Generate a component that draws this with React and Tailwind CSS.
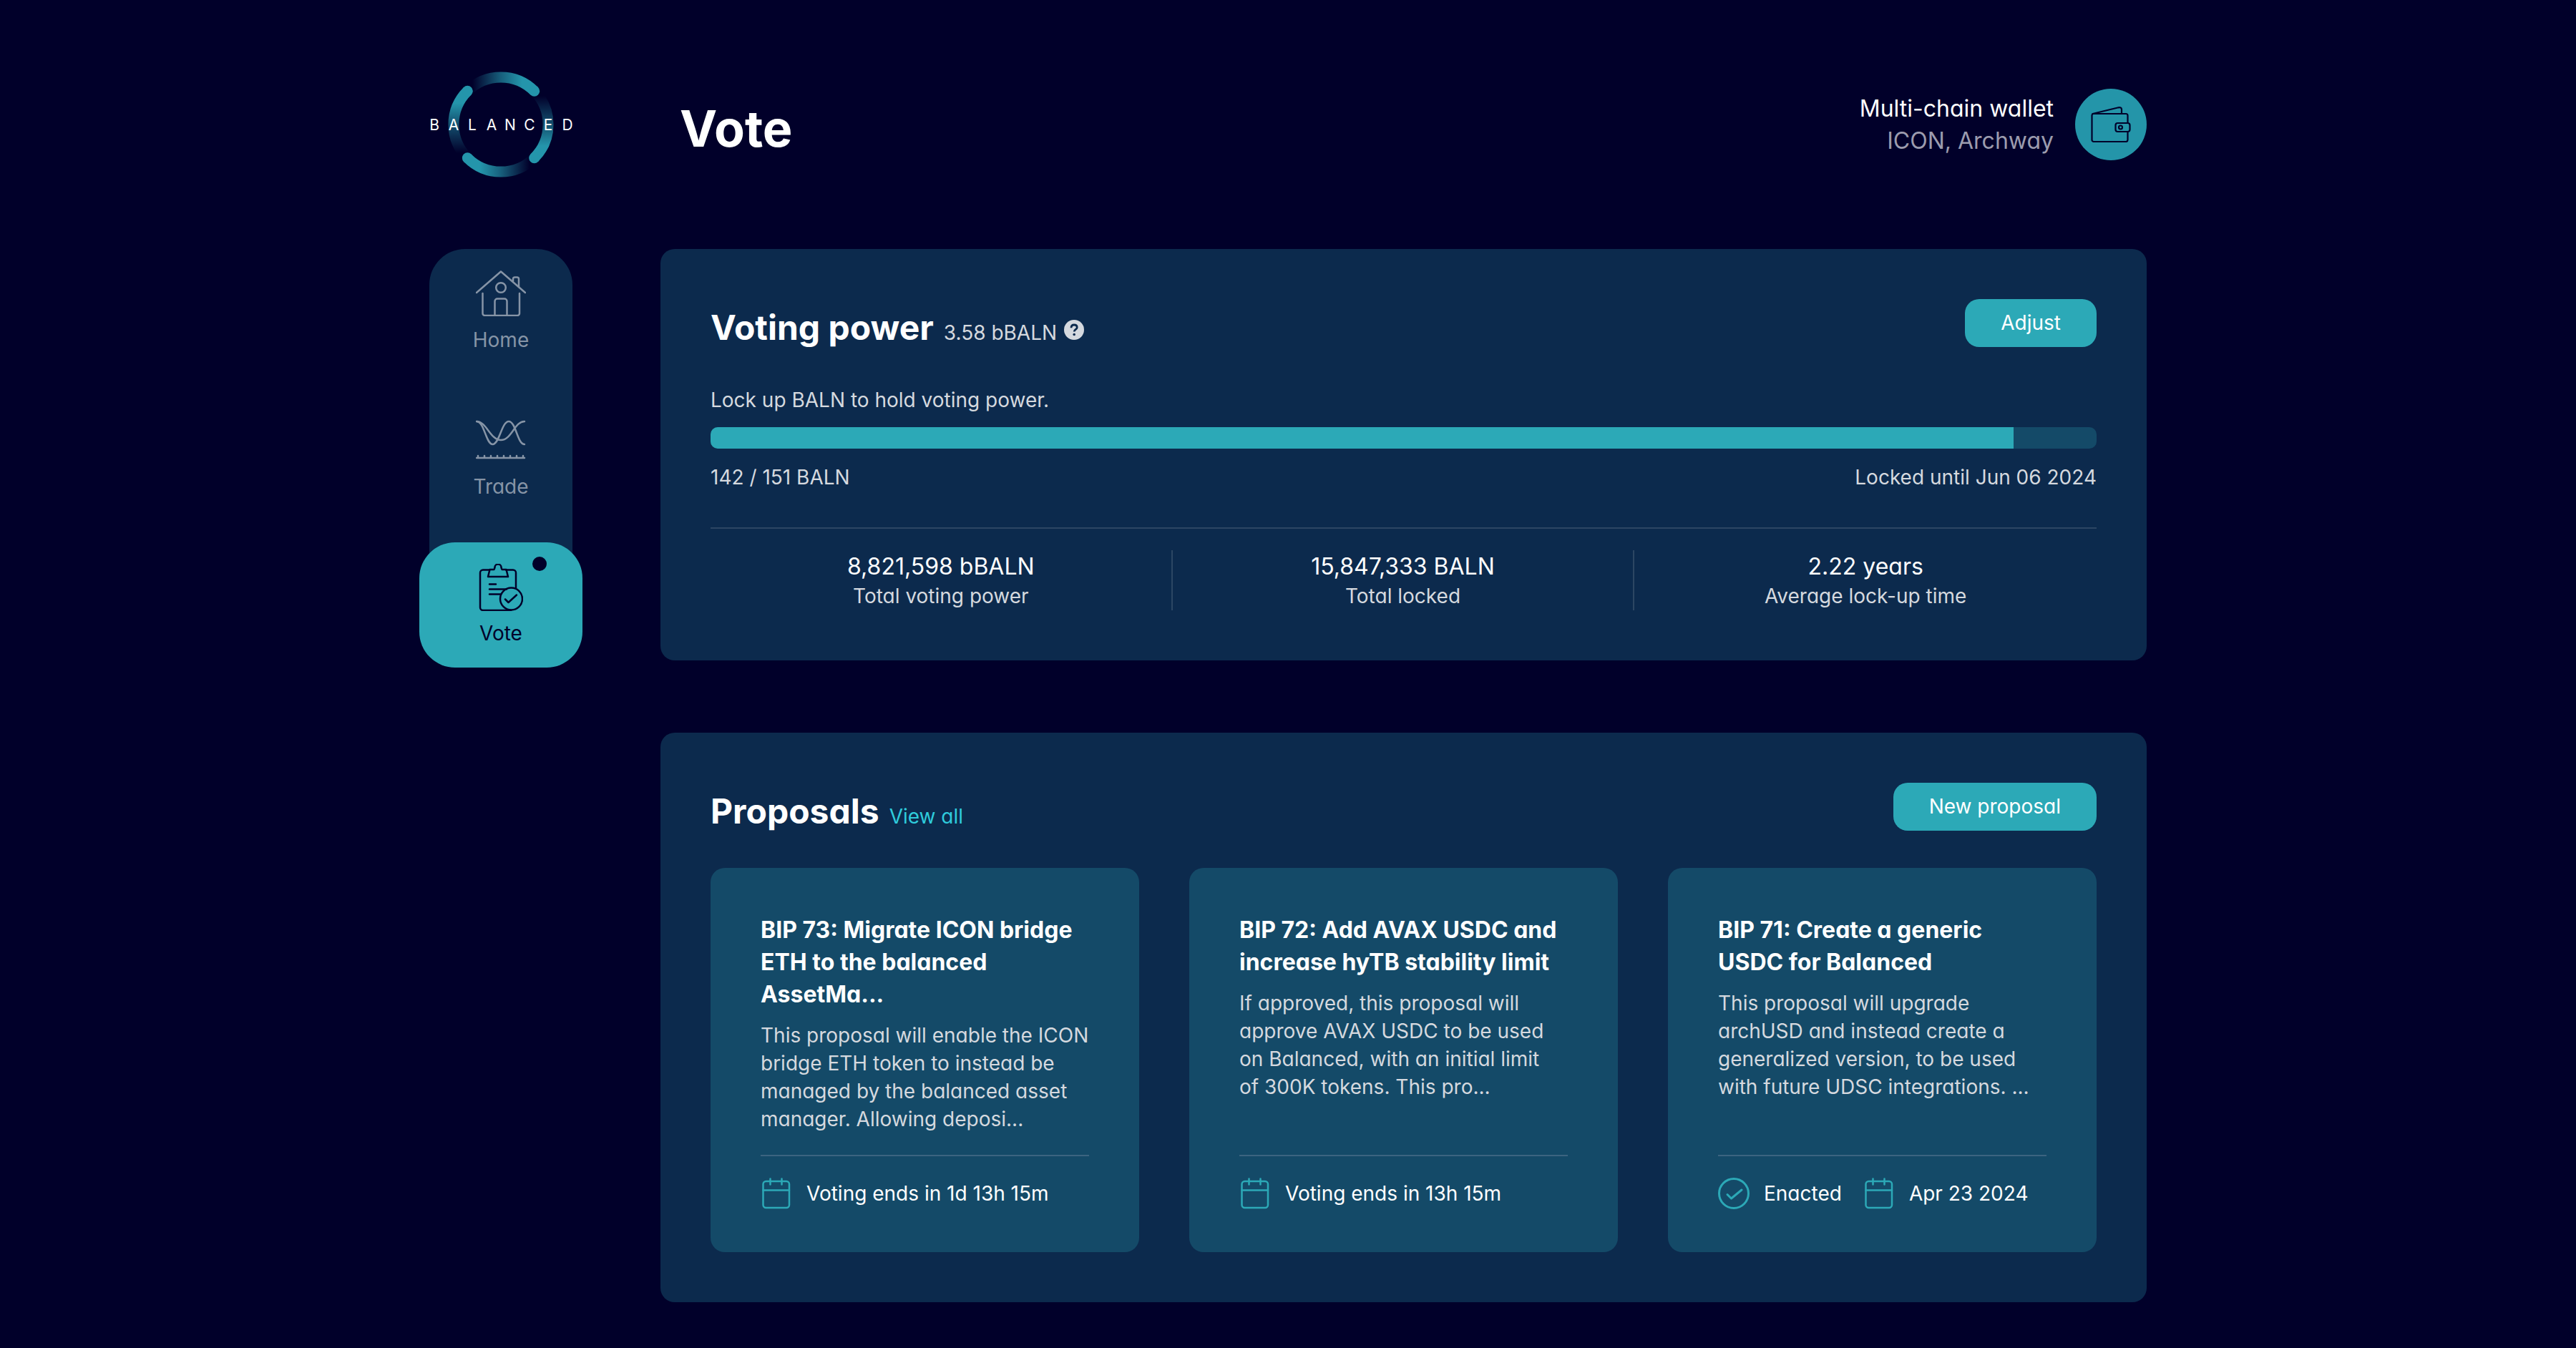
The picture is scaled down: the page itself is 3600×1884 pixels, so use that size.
const letters = "BALANCED";

function Logo() {
  return (
    <svg viewBox="0 0 200 148" className="w-[200px] shrink-0 overflow-visible" role="img" aria-label="Balanced">
      <defs>
        <linearGradient id="fadeRight" gradientUnits="userSpaceOnUse" x1="60" y1="0" x2="142" y2="0">
          <stop offset="0" stopColor="#2495ab" stopOpacity="0" />
          <stop offset="0.5" stopColor="#2495ab" stopOpacity="0.65" />
          <stop offset="0.85" stopColor="#2495ab" />
        </linearGradient>
        <linearGradient id="fadeDown" gradientUnits="userSpaceOnUse" x1="0" y1="34" x2="0" y2="116">
          <stop offset="0" stopColor="#2495ab" stopOpacity="0" />
          <stop offset="0.5" stopColor="#2495ab" stopOpacity="0.55" />
          <stop offset="0.85" stopColor="#2495ab" />
        </linearGradient>
      </defs>
      <g fill="none" strokeWidth="15">
        {["fadeRight", "fadeDown"].map((id, i) => (
          <g key={id} stroke={`url(#${id})`}>
            <path d={i ? "M146.7 27.3A66 66 0 0 1 146.7 120.7" : "M53.3 27.3A66 66 0 0 1 146.7 27.3"} />
            <path
              transform="rotate(180 100 74)"
              d={i ? "M146.7 27.3A66 66 0 0 1 146.7 120.7" : "M53.3 27.3A66 66 0 0 1 146.7 27.3"}
            />
          </g>
        ))}
      </g>
      <g fill="#2495ab">
        <circle cx="146.7" cy="27.3" r="7.5" />
        <circle cx="146.7" cy="120.7" r="7.5" />
        <circle cx="53.3" cy="120.7" r="7.5" />
        <circle cx="53.3" cy="27.3" r="7.5" />
      </g>
      <text
        x="7 34 60 87 113 140 166 193"
        y="82"
        textAnchor="middle"
        fill="#fff"
        fontSize="21"
        fontWeight="400"
      >
        {letters}
      </text>
    </svg>
  );
}

function HomeIcon() {
  return (
    <svg viewBox="0 0 70 64" className="h-16 w-[70px]" fill="none" stroke="currentColor" strokeWidth="2.5" strokeLinecap="round" strokeLinejoin="round">
      <path d="M1 31 35 1.5 69 31" />
      <path d="M9.5 32V60a3 3 0 0 0 3 3H58a3 3 0 0 0 3-3V32" />
      <path d="M26.5 63V43a3.5 3.5 0 0 1 3.5-3.5H40a3.5 3.5 0 0 1 3.5 3.5V63" />
      <circle cx="35" cy="24" r="6.8" />
      <path d="M52 15V12a2.5 2.5 0 0 1 2.5-2.5H57.5A2.5 2.5 0 0 1 60 12V23" />
    </svg>
  );
}

function TradeIcon() {
  return (
    <svg viewBox="0 0 70 64" className="h-16 w-[70px]" fill="none" stroke="currentColor" strokeWidth="2.5" strokeLinecap="round" strokeLinejoin="round">
      <path d="M1 6C12 6 14 38 23.5 38S36 6 46 6 58 38 68 38" />
      <path d="M1 6C15 6 20 32 35 32S54 6 68 6" />
      <path d="M1 57H68M3 57V54M12 57V54M21 57V54M30 57V54M39 57V54M48 57V54M57 57V54M66 57V54" />
    </svg>
  );
}

function VoteIcon() {
  return (
    <svg viewBox="0 0 62 66" className="h-[66px] w-[62px]" fill="none" stroke="currentColor" strokeWidth="2.5" strokeLinecap="round" strokeLinejoin="round">
      <path d="M15 8.5H6a4 4 0 0 0-4 4V61a4 4 0 0 0 4 4H45" />
      <path d="M38 8.5H48a4 4 0 0 1 4 4V34" />
      <path d="M13 18 15.5 8H21C22 8 22 6.5 22.5 5A4.5 4.5 0 0 1 31.5 5C32 6.5 32 8 33 8H38.5L41 18Z" />
      <path d="M15 28.5H24M15 35.5H39M15 42.5H31" />
      <circle cx="45.5" cy="49" r="15.5" />
      <path d="M37 49.5 41.5 54 53 43.5" />
    </svg>
  );
}

function WalletIcon() {
  return (
    <svg viewBox="0 0 56 50" className="h-[50px] w-14" fill="none" stroke="#01002a" strokeWidth="2.2" strokeLinecap="round" strokeLinejoin="round">
      <rect x="1.5" y="10" width="50" height="39" rx="2.5" />
      <path d="M2.5 10 38.5 1.3C41 .8 43 1.6 43 4V10" />
      <rect x="34.5" y="23" width="20" height="12" rx="3" fill="#2495a9" />
      <circle cx="41.5" cy="29" r="2.5" />
    </svg>
  );
}

function CalendarIcon() {
  return (
    <svg viewBox="0 0 44 44" className="size-11 shrink-0" fill="none" stroke="#2ca9b7" strokeWidth="2.5" strokeLinecap="round">
      <rect x="3.5" y="5" width="36.5" height="37" rx="4" />
      <path d="M3.5 17.5H40M13.5 1.5V9.5M29.5 1.5V9.5" />
    </svg>
  );
}

function CheckIcon() {
  return (
    <svg viewBox="0 0 44 44" className="size-11 shrink-0" fill="none" stroke="#2ca9b7" strokeWidth="3" strokeLinecap="round" strokeLinejoin="round">
      <circle cx="22" cy="22" r="20.5" />
      <path d="M13 23.5 18.5 29 33 17" />
    </svg>
  );
}

function HelpIcon() {
  return (
    <svg viewBox="0 0 28 28" className="size-7">
      <circle cx="14" cy="14" r="14" fill="#d5d9df" />
      <path d="M10 11.2C10 8.6 11.7 7 14.1 7S18.2 8.5 18.2 10.7C18.2 13.4 14.2 13.5 14.2 16.5" fill="none" stroke="#0c2a4d" strokeWidth="2.8" />
      <circle cx="14.2" cy="20.5" r="1.8" fill="#0c2a4d" />
    </svg>
  );
}

const navItems = [
  { label: "Home", Icon: HomeIcon },
  { label: "Trade", Icon: TradeIcon },
  { label: "Vote", Icon: VoteIcon, active: true },
];

const stats = [
  { value: "8,821,598 bBALN", label: "Total voting power" },
  { value: "15,847,333 BALN", label: "Total locked" },
  { value: "2.22 years", label: "Average lock-up time" },
];

const proposals = [
  {
    title: "BIP 73: Migrate ICON bridge ETH to the balanced AssetMa...",
    body: "This proposal will enable the ICON\nbridge ETH token to instead be\nmanaged by the balanced asset\nmanager. Allowing deposi...",
    meta: [{ Icon: CalendarIcon, text: "Voting ends in 1d 13h 15m" }],
  },
  {
    title: "BIP 72: Add AVAX USDC and increase hyTB stability limit",
    body: "If approved, this proposal will\napprove AVAX USDC to be used\non Balanced, with an initial limit\nof 300K tokens. This pro...",
    meta: [{ Icon: CalendarIcon, text: "Voting ends in 13h 15m" }],
  },
  {
    title: "BIP 71: Create a generic USDC for Balanced",
    body: "This proposal will upgrade\narchUSD and instead create a\ngeneralized version, to be used\nwith future UDSC integrations. ...",
    meta: [
      { Icon: CheckIcon, text: "Enacted" },
      { Icon: CalendarIcon, text: "Apr 23 2024" },
    ],
  },
];

function PrimaryButton({ children }) {
  return (
    <button type="button" className="rounded-[20px] bg-[#2ca9b7] px-[50px] py-[14px] text-[28px] leading-[39px] text-white">
      {children}
    </button>
  );
}

function ProposalCard({ title, body, meta }) {
  return (
    <article className="flex flex-col rounded-[20px] bg-[#144a68] px-[70px] pt-16 pb-[60px]">
      <h3 className="text-[32px] leading-[45px] font-bold text-white">{title}</h3>
      <p className="mt-4 mb-[30px] text-[28px] leading-[39px] whitespace-pre-line text-[#d5d9df]">{body}</p>
      <div className="mt-auto flex gap-[30px] border-t-2 border-[#3c6480] pt-[30px]">
        {meta.map(({ Icon, text }) => (
          <div key={text} className="flex items-center gap-5 text-[28px] whitespace-nowrap text-white">
            <Icon />
            {text}
          </div>
        ))}
      </div>
    </article>
  );
}

export default function App() {
  return (
    <div className="min-h-screen bg-[#01002a] pb-16 font-['Inter',sans-serif] text-white [font-feature-settings:'cv11']">
      <div className="mx-auto w-full max-w-[2400px] pt-[100px]">
        <header className="flex items-center">
          <Logo />
          <h1 className="ml-[150px] flex-1 pt-3 text-[70px] leading-none font-bold">Vote</h1>
          <div className="text-right text-[32px] leading-[45px]">
            <p>Multi-chain wallet</p>
            <p className="text-[#9c9cae]">ICON, Archway</p>
          </div>
          <button type="button" aria-label="Wallet" className="ml-[30px] flex size-[100px] items-center justify-center rounded-full bg-[#2495a9]">
            <WalletIcon />
          </button>
        </header>

        <div className="mt-[100px] flex items-start gap-[123px]">
          <nav className="w-[200px] shrink-0 rounded-[50px] bg-[#0c2a4d]">
            <ul className="flex flex-col gap-[30px]">
              {navItems.map(({ label, Icon, active }) => (
                <li key={label} className={active ? "-mx-[14px]" : ""}>
                  <a
                    href="#"
                    className={
                      active
                        ? "relative flex flex-col items-center rounded-[50px] bg-[#2ca9b7] pt-[30px] pb-7 text-[#01002a]"
                        : "flex flex-col items-center pt-[30px] pb-7 text-[#8694a6]"
                    }
                  >
                    <Icon />
                    <span className={active ? "mt-3 text-[28px] leading-[39px]" : "mt-[14px] text-[28px] leading-[39px]"}>{label}</span>
                    {active && <span className="absolute top-5 right-[50px] size-5 rounded-full bg-[#01002a]" />}
                  </a>
                </li>
              ))}
            </ul>
          </nav>

          <main className="flex min-w-0 flex-1 flex-col gap-[101px]">
            <section className="rounded-[20px] bg-[#0c2a4d] p-[70px]">
              <div className="flex items-center justify-between">
                <div className="flex items-baseline gap-[14px] pt-3">
                  <h2 className="text-[48px] leading-none font-bold">Voting power</h2>
                  <p className="flex items-baseline gap-[10px] text-[28px] leading-none text-[#d5d9df]">
                    3.58 bBALN <HelpIcon />
                  </p>
                </div>
                <PrimaryButton>Adjust</PrimaryButton>
              </div>

              <p className="mt-[55px] text-[28px] leading-[39px] text-[#d5d9df]">Lock up BALN to hold voting power.</p>
              <div className="mt-[18px] h-[30px] overflow-hidden rounded-[10px] bg-[#144a68]">
                <div className="h-full w-[94%] bg-[#2ca9b7]" />
              </div>
              <div className="mt-[21px] flex justify-between text-[28px] leading-[39px] text-[#d5d9df]">
                <span>142 / 151 BALN</span>
                <span>Locked until Jun 06 2024</span>
              </div>

              <dl className="mt-[50px] grid grid-cols-3 divide-x-2 divide-[#2c4663] border-t-2 border-[#2c4663] pt-[30px] text-center">
                {stats.map(({ value, label }) => (
                  <div key={label} className="flex flex-col-reverse">
                    <dt className="text-[28px] leading-[39px] text-[#d5d9df]">{label}</dt>
                    <dd className="text-[32px] leading-[45px] text-white">{value}</dd>
                  </div>
                ))}
              </dl>
            </section>

            <section className="rounded-[20px] bg-[#0c2a4d] p-[70px]">
              <div className="flex items-center justify-between">
                <div className="flex items-baseline gap-[14px] pt-3">
                  <h2 className="text-[48px] leading-none font-bold">Proposals</h2>
                  <a href="#" className="text-[28px] leading-none text-[#2fccdc]">View all</a>
                </div>
                <PrimaryButton>New proposal</PrimaryButton>
              </div>
              <div className="mt-[52px] grid grid-cols-3 gap-[70px]">
                {proposals.map((proposal) => (
                  <ProposalCard key={proposal.title} {...proposal} />
                ))}
              </div>
            </section>
          </main>
        </div>
      </div>
    </div>
  );
}
